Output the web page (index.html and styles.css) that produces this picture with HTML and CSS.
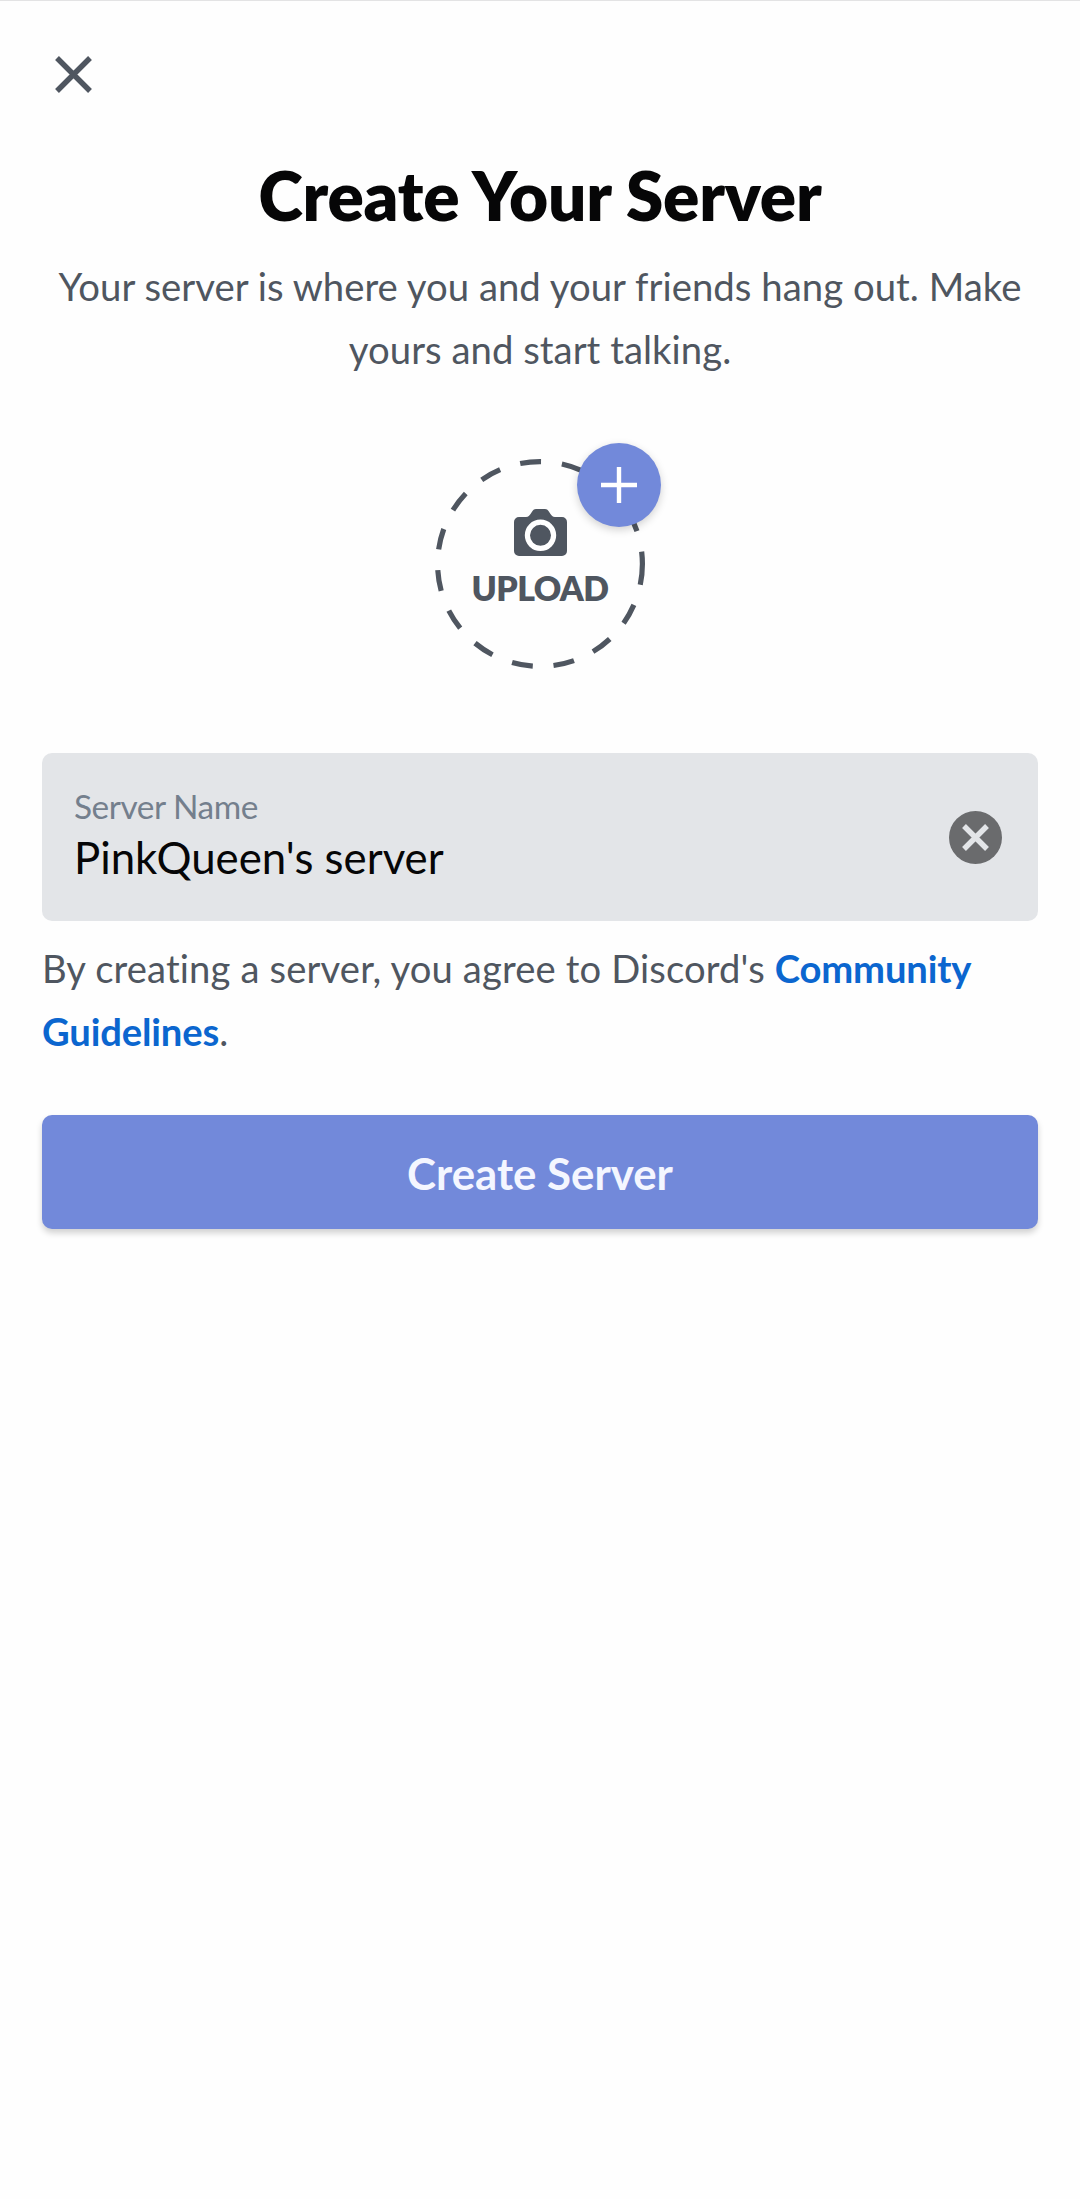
FILE: index.html
```
<!DOCTYPE html>
<html lang="en">
<head>
    <meta charset="UTF-8">
    <title>Create Your Server</title>
    <link rel="stylesheet" href="styles.css">
</head>
<body>
    <div class="header">
        <button class="close-btn" aria-label="Close">
            <svg width="38" height="38" viewBox="0 0 38 38">
                <path d="M3 3L36 36M36 3L3 36" stroke="#4f5660" stroke-width="5.4" fill="none"/>
            </svg>
        </button>
    </div>

    <div class="content">
        <h1>Create Your Server</h1>
        <p class="subtitle">Your server is where you and your friends hang out. Make yours and start talking.</p>

        <div class="upload">
            <svg class="upload-ring" width="210" height="210" viewBox="0 0 210 210">
                <circle cx="105" cy="105" r="102.4" fill="none" stroke="#4f5660" stroke-width="5.2" stroke-dasharray="21 21"/>
            </svg>
            <svg class="camera" width="53" height="48" viewBox="0 0 53 48">
                <path d="M5 8h7c2.5 0 3.5-1.5 4.5-3l2-3c.8-1.3 1.800-2 3.500-2h9c1.700 0 2.700.7 3.500 2l2 3c1 1.500 2 3 4.500 3h7a5 5 0 0 1 5 5v29a5 5 0 0 1-5 5H5a5 5 0 0 1-5-5V13a5 5 0 0 1 5-5z" fill="#4f5660"/>
                <circle cx="26.5" cy="26.3" r="13.1" fill="none" stroke="#fff" stroke-width="5.2"/>
            </svg>
            <span class="upload-label">UPLOAD</span>
            <div class="badge">
                <svg width="36" height="36" viewBox="0 0 36 36">
                    <path d="M18 0v36M0 18h36" stroke="#fff" stroke-width="4.4"/>
                </svg>
            </div>
        </div>

        <div class="field">
            <div class="field-text">
                <span class="field-label">Server Name</span>
                <span class="field-value">PinkQueen's server</span>
            </div>
            <svg class="clear" width="53" height="53" viewBox="0 0 53 53">
                <circle cx="26.5" cy="26.5" r="26.5" fill="#6a6b6d"/>
                <path d="M15 15l23 23M38 15l-23 23" stroke="#e3e5e8" stroke-width="5.4"/>
            </svg>
        </div>

        <p class="terms">By creating a server, you agree to Discord's <a class="link">Community Guidelines</a>.</p>

        <button class="create-btn">Create Server</button>
    </div>
</body>
</html>
```
FILE: styles.css
```
* {
    box-sizing: border-box;
}
body {
    margin: 0;
    min-height: 100vh;
    border-top: 1px solid #e3e3e4;
    background-color: #fefefe;
    font-family: Lato, 'Open Sans', sans-serif;
    color: #4f5660;
}
button {
    border: none;
    padding: 0;
    font-family: inherit;
    cursor: pointer;
}
.header {
    height: 153px;
    padding: 54px 0 0 54px;
}
.close-btn {
    display: block;
    width: 38px;
    height: 38px;
    background: none;
}
.content {
    display: flex;
    flex-direction: column;
    padding: 0 42px;
}
h1 {
    margin: 0 0 20px;
    font-size: 67.5px;
    line-height: 81px;
    font-weight: 800;
    letter-spacing: -0.2px;
    text-align: center;
    color: #060607;
}
.subtitle {
    margin: 0;
    font-size: 38.3px;
    line-height: 63px;
    letter-spacing: 0.03px;
    text-align: center;
}
.upload {
    position: relative;
    display: flex;
    flex-direction: column;
    align-items: center;
    align-self: center;
    width: 210px;
    height: 210px;
    margin: 78px 0 84px;
    padding-top: 50px;
}
.upload-ring {
    position: absolute;
    top: 0;
    left: 0;
}
.camera {
    display: block;
}
.upload-label {
    margin-top: 11px;
    font-size: 33.8px;
    line-height: 40px;
    font-weight: 800;
    letter-spacing: -0.6px;
}
.badge {
    position: absolute;
    top: -16px;
    right: -16px;
    display: flex;
    align-items: center;
    justify-content: center;
    width: 84px;
    height: 84px;
    border-radius: 50%;
    background-color: #7289da;
    box-shadow: 0 3px 8px rgba(0,0,0,0.18);
}
.field {
    display: flex;
    align-items: center;
    justify-content: space-between;
    height: 168px;
    padding: 0 36px 0 32px;
    border-radius: 10px;
    background-color: #e3e5e8;
}
.field-text {
    display: flex;
    flex-direction: column;
    gap: 5px;
    padding-bottom: 5px;
}
.field-label {
    font-size: 33.4px;
    line-height: 40px;
    letter-spacing: -0.45px;
    color: #747f8d;
}
.field-value {
    font-size: 43.8px;
    line-height: 52px;
    color: #060607;
}
.terms {
    margin: 16px 0 52px;
    font-size: 38.2px;
    line-height: 63px;
    letter-spacing: 0.14px;
}
.link {
    font-weight: 700;
    letter-spacing: -0.15px;
    color: #0b66cf;
}
.create-btn {
    height: 114px;
    padding-top: 1px;
    border-radius: 10px;
    background-color: #7289da;
    box-shadow: 0 4px 6px rgba(0,0,0,0.18);
    font-size: 43.8px;
    font-weight: 700;
    color: #f4f6ff;
}
```
